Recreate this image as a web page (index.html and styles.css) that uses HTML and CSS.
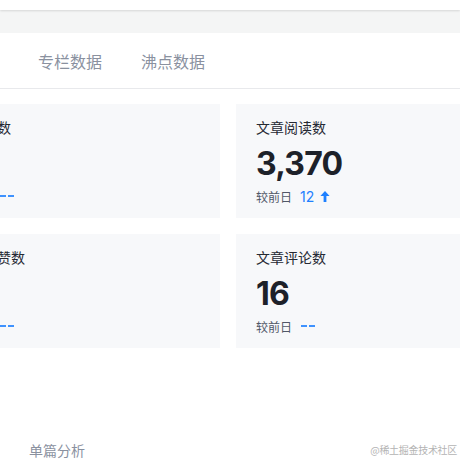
FILE: index.html
```html
<!DOCTYPE html>
<html lang="zh-CN">
<head>
<meta charset="utf-8">
<title>数据中心</title>
<link rel="stylesheet" href="styles.css">
</head>
<body>
<header class="topbar"></header>
<div class="band"></div>
<main class="panel">
  <nav class="tabs">
    <span class="tab tab-active">文章数据</span>
    <span class="tab">专栏数据</span>
    <span class="tab">沸点数据</span>
  </nav>
  <section class="grid">
    <div class="card">
      <div class="card-title">总展现数</div>
      <div class="card-num">0</div>
      <div class="card-sub"><span class="sub-label">较前日</span><span class="dash"></span></div>
    </div>
    <div class="card">
      <div class="card-title">文章阅读数</div>
      <div class="card-num">3,370</div>
      <div class="card-sub"><span class="sub-label">较前日</span><span class="sub-value">12</span>
        <svg class="arrow" width="10" height="11" viewBox="0 0 10 11"><path d="M5 0 L9.6 5 L6.4 5 L6.4 11 L3.6 11 L3.6 5 L0.4 5 Z" fill="#1e80ff"/></svg>
      </div>
    </div>
    <div class="card">
      <div class="card-title">文章点赞数</div>
      <div class="card-num">0</div>
      <div class="card-sub"><span class="sub-label">较前日</span><span class="dash"></span></div>
    </div>
    <div class="card">
      <div class="card-title">文章评论数</div>
      <div class="card-num">16</div>
      <div class="card-sub"><span class="sub-label">较前日</span><span class="dash"></span></div>
    </div>
  </section>
  <div class="section-title">单篇分析</div>
</main>
<div class="watermark">@稀土掘金技术社区</div>
</body>
</html>
```
FILE: styles.css
```css
html, body {
  margin: 0;
  padding: 0;
  overflow: hidden;
  background: #ffffff;
}
body {
  width: 460px;
  height: 460px;
  position: relative;
  font-family: Inter, "Noto Sans CJK SC", sans-serif;
  color: #252933;
}
.topbar {
  height: 10px;
  background: #ffffff;
  box-shadow: 0 1px 2px rgba(0, 0, 0, 0.12);
  position: relative;
  z-index: 1;
}
.band {
  height: 23px;
  background: #f4f5f5;
}
.panel {
  margin-left: -65px;
  width: 603px;
  background: #ffffff;
}
.tabs {
  height: 55px;
  display: flex;
  align-items: center;
  gap: 39px;
  border-bottom: 1px solid #e8e9ec;
  font-family: "Noto Sans CJK SC", sans-serif;
  font-size: 16px;
  color: #8a919f;
}
.tab-active {
  color: #1e80ff;
}
.grid {
  display: grid;
  grid-template-columns: 285px 302px;
  gap: 16px;
  padding-top: 15px;
}
.card {
  height: 114px;
  box-sizing: border-box;
  padding: 12px 20px;
  background: #f7f8fa;
}
.card-title {
  font-family: "Noto Sans CJK SC", sans-serif;
  font-size: 14px;
  line-height: 22px;
  color: #252933;
}
.card-num {
  margin-top: 6px;
  font-size: 32px;
  line-height: 40px;
  font-weight: 700;
  letter-spacing: -0.8px;
  color: #1d2129;
}
.card-sub {
  margin-top: 2px;
  height: 20px;
  display: flex;
  align-items: center;
}
.sub-label {
  font-family: "Noto Sans CJK SC", sans-serif;
  font-size: 12px;
  color: #515767;
}
.sub-value {
  margin-left: 8px;
  font-size: 14px;
  color: #1e80ff;
}
.arrow {
  margin-left: 6px;
}
.dash {
  margin-left: 9px;
  width: 15px;
  height: 2px;
  background: repeating-linear-gradient(90deg, #1e80ff 0 6.5px, transparent 6.5px 8px);
  opacity: 0.85;
}
.section-title {
  margin-top: 91px;
  padding-left: 94px;
  font-family: "Noto Sans CJK SC", sans-serif;
  font-size: 14px;
  line-height: 22px;
  color: #8a919f;
}
.watermark {
  position: absolute;
  right: 3px;
  top: 443px;
  font-family: "Noto Sans CJK SC", serif;
  font-size: 10px;
  line-height: 14px;
  color: #b4b4b4;
  letter-spacing: -0.3px;
}
```
